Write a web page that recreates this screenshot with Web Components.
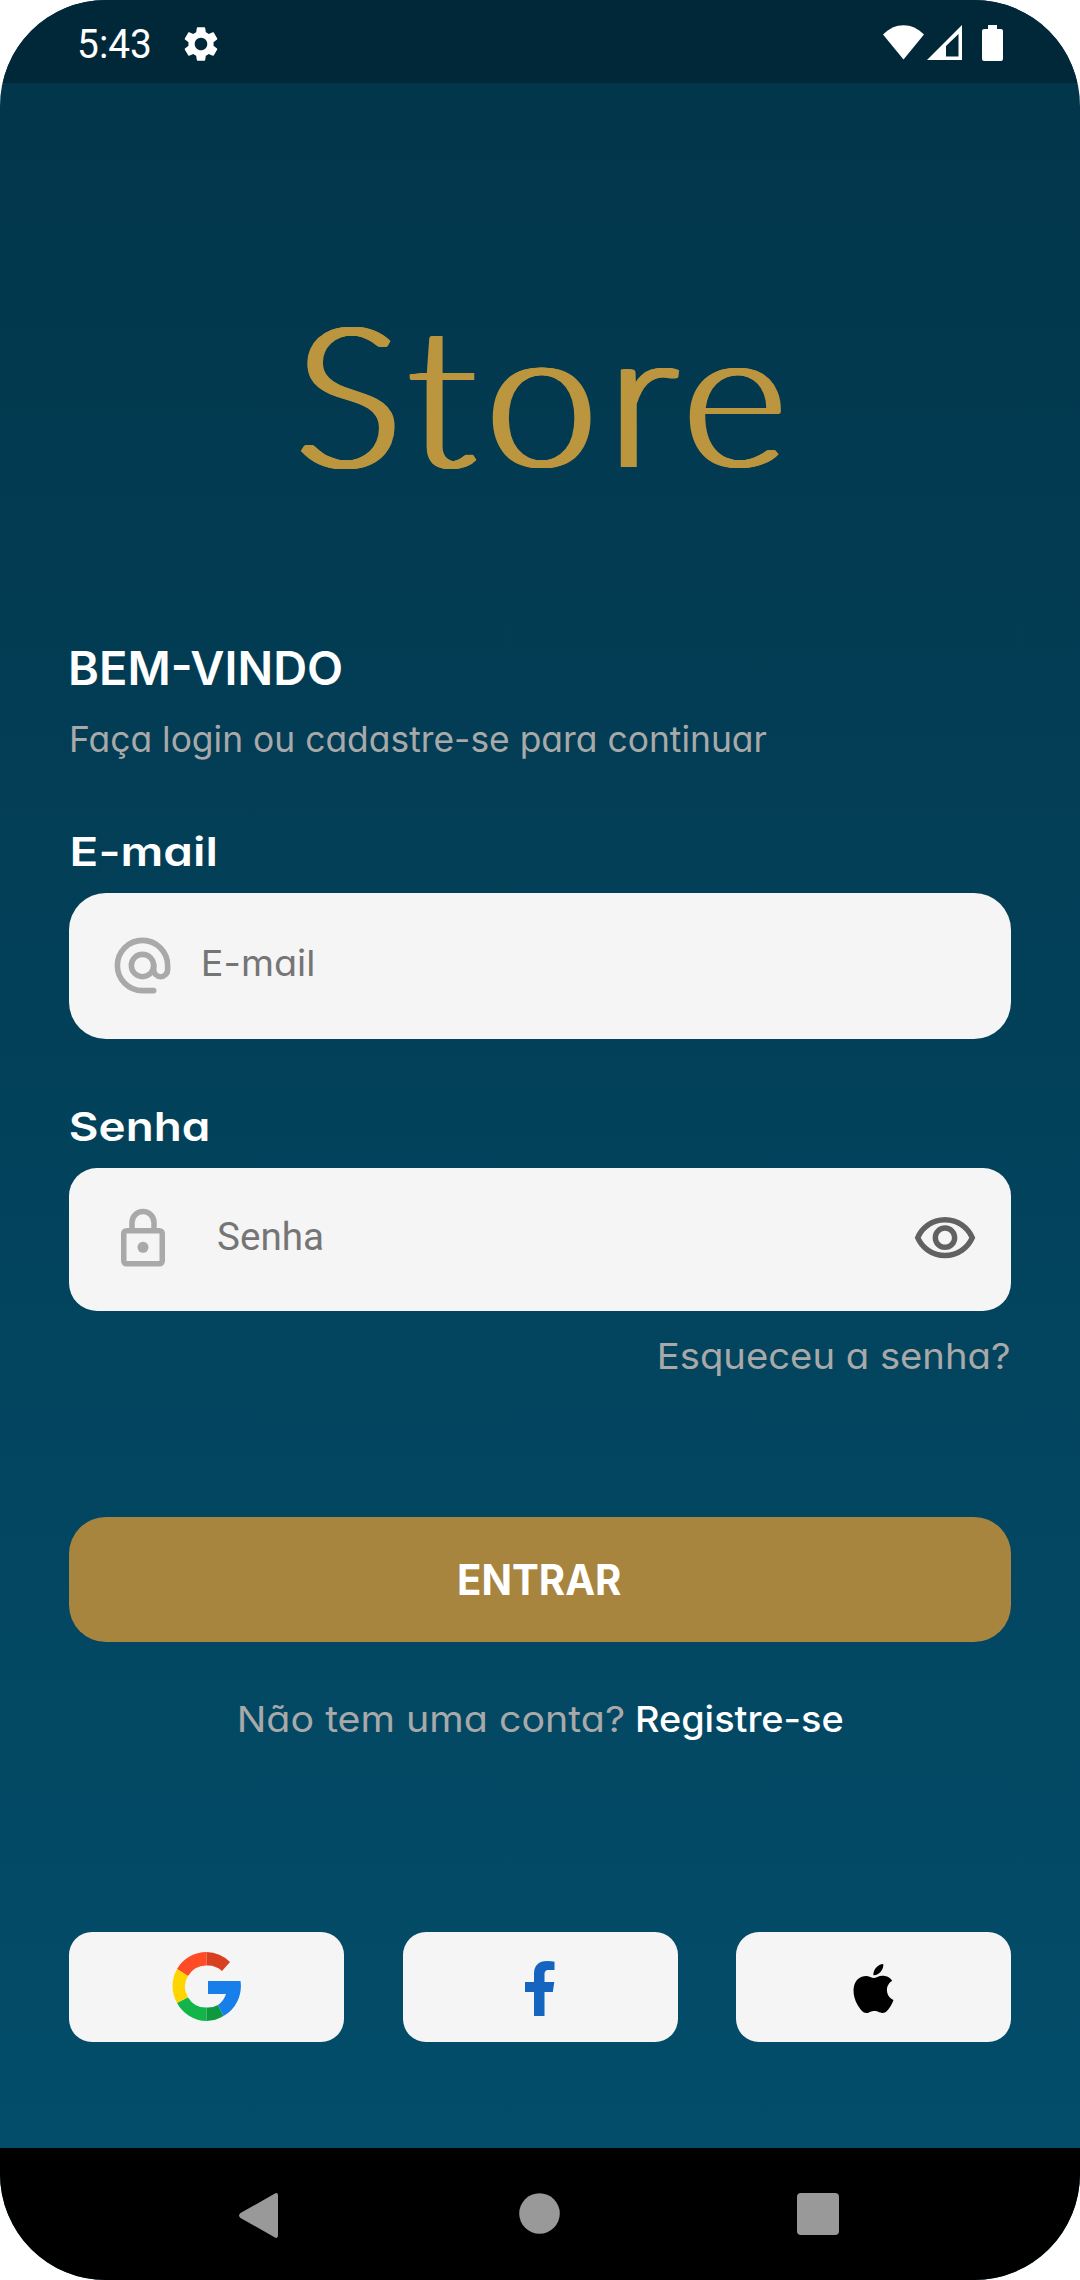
<!DOCTYPE html>
<html lang="pt-BR">
<head>
<meta charset="utf-8">
<title>Store</title>
<style>
html,body{margin:0;padding:0;background:#fff}
body{width:1080px;height:2280px;overflow:hidden;font-family:Inter,"Noto Sans",sans-serif}
</style>
</head>
<body>
<login-screen></login-screen>
<script>
const icons={
settings:'<svg viewBox="0 0 24 24"><path fill="currentColor" d="M19.14 12.94c.04-.3.06-.61.06-.94 0-.32-.02-.64-.07-.94l2.03-1.58c.18-.14.23-.41.12-.61l-1.92-3.32c-.12-.22-.37-.29-.59-.22l-2.39.96c-.5-.38-1.03-.7-1.62-.94L14.4 2.81c-.04-.24-.24-.41-.48-.41h-3.84c-.24 0-.43.17-.47.41L9.25 5.35C8.66 5.59 8.12 5.92 7.63 6.29L5.24 5.33c-.22-.08-.47 0-.59.22L2.74 8.87c-.12.21-.08.47.12.61l2.03 1.58C4.84 11.36 4.8 11.69 4.8 12s.02.64.07.94l-2.03 1.58c-.18.14-.23.41-.12.61l1.92 3.32c.12.22.37.29.59.22l2.39-.96c.5.38 1.03.7 1.62.94l.36 2.54c.05.24.24.41.48.41h3.84c.24 0 .44-.17.47-.41l.36-2.54c.59-.24 1.13-.56 1.62-.94l2.39.96c.22.08.47 0 .59-.22l1.92-3.32c.12-.22.07-.47-.12-.61l-2.01-1.58zM12 15.6c-1.98 0-3.6-1.62-3.6-3.6s1.62-3.6 3.6-3.6 3.6 1.62 3.6 3.6-1.62 3.6-3.6 3.6z"/></svg>',
wifi:'<svg viewBox="0 0 41 36"><path fill="currentColor" d="M0 9.5C12-3 29-3 41 9.5L20.500 34.500Z"/></svg>',
signal:'<svg viewBox="0 0 35 36"><path fill="currentColor" fill-rule="evenodd" d="M0 35 35 0V35ZM19 31.500H31.500V9L19 21Z"/></svg>',
battery:'<svg viewBox="0 0 21 36"><path fill="currentColor" d="M6 0h9v4h4a2 2 0 0 1 2 2v28a2 2 0 0 1-2 2H2a2 2 0 0 1-2-2V6a2 2 0 0 1 2-2h4Z"/></svg>',
at:'<svg viewBox="0 0 24 24" fill="none" stroke="currentColor" stroke-width="2" stroke-linecap="round"><path d="M16 21h-4a9 9 0 1 1 9-9v1.500a2.500 2.500 0 0 1-5 0V12"/><circle cx="12" cy="12" r="4"/></svg>',
lock:'<svg viewBox="0 0 24 24" fill="none" stroke="currentColor" stroke-width="2"><rect x="5" y="9" width="14" height="12" rx="1"/><path d="M8 9V6a4 4 0 0 1 8 0v3"/><circle cx="12" cy="15" r="2" fill="currentColor" stroke="none"/></svg>',
eye:'<svg viewBox="0 0 24 24"><path fill="currentColor" d="M12 6c3.790 0 7.170 2.130 8.820 5.500C19.170 14.870 15.790 17 12 17s-7.170-2.130-8.820-5.500C4.830 8.130 8.210 6 12 6m0-2C7 4 2.730 7.110 1 11.500 2.730 15.890 7 19 12 19s9.270-3.110 11-7.500C21.270 7.110 17 4 12 4zm0 5c1.380 0 2.500 1.120 2.500 2.500S13.380 14 12 14s-2.500-1.120-2.500-2.500S10.620 9 12 9m0-2c-2.480 0-4.500 2.020-4.500 4.500S9.520 16 12 16s4.500-2.020 4.500-4.500S14.480 7 12 7z"/></svg>',
google:'<svg viewBox="0 0 69 69"><path fill="#ff4b26" d="M34.500 0A34.500 34.500 0 0 0 5 17L16 24A21 21 0 0 1 34.500 13.500Z"/><path fill="#d93f21" d="M34.500 0A34.500 34.500 0 0 1 58 10L50 19A21 21 0 0 0 34.500 13.500Z"/><path fill="#ffd500" d="M5 17A34.500 34.500 0 0 0 5 51L16 45.500A21 21 0 0 1 16 24Z"/><path fill="#13b54a" d="M5 51A34.500 34.500 0 0 0 34.500 69V55.500A21 21 0 0 1 16 45.500Z"/><path fill="#0f993e" d="M34.500 69A34.500 34.500 0 0 0 51.500 64L46 53A21 21 0 0 1 34.500 55.500Z"/><path fill="#187eea" d="M36 29H68.500A34.500 34.500 0 0 1 51.500 64L46 53A21 21 0 0 0 54 42H36Z"/></svg>',
facebook:'<svg viewBox="0 0 30 55"><path fill="#1565c0" d="M9 55V31H0V21H9V13C9 4 14 0 22 0Q27 0 29.500 .7V9H24C20 9 19.500 11 19.500 14V21H29.300L27.800 31H19.500V55Z"/></svg>',
apple:'<svg viewBox="0 0 24 24"><path d="M12.152 6.896c-.948 0-2.415-1.078-3.960-1.040-2.040.027-3.910 1.183-4.961 3.014-2.117 3.675-.546 9.103 1.519 12.090 1.013 1.454 2.208 3.090 3.792 3.039 1.520-.065 2.090-.987 3.935-.987 1.831 0 2.350.987 3.960.948 1.637-.026 2.676-1.480 3.676-2.948 1.156-1.688 1.636-3.325 1.662-3.415-.039-.013-3.182-1.221-3.220-4.857-.026-3.040 2.480-4.494 2.597-4.559-1.429-2.090-3.623-2.324-4.390-2.376-2-.156-3.675 1.090-4.610 1.090zM15.530 3.830c.843-1.012 1.400-2.427 1.245-3.830-1.207.052-2.662.805-3.532 1.818-.780.896-1.454 2.338-1.273 3.714 1.338.104 2.715-.688 3.559-1.701"/></svg>',
back:'<svg viewBox="0 0 39 45"><path fill="currentColor" d="M35.500 .8Q39-1.500 39 3V42Q39 46.500 35.500 44.200L1.500 25Q-1.500 22.500 1.500 20Z"/></svg>',
home:'<svg viewBox="0 0 41 41"><circle cx="20.500" cy="20.500" r="20.300" fill="currentColor"/></svg>',
recents:'<svg viewBox="0 0 42 42"><rect width="42" height="42" rx="4" fill="currentColor"/></svg>'
};
const define=(name,html,setup)=>{
  const t=document.createElement('template');
  t.innerHTML=html;
  customElements.define(name,class extends HTMLElement{
    connectedCallback(){
      if(this.shadowRoot)return;
      this.attachShadow({mode:'open'}).append(t.content.cloneNode(true));
      if(setup)setup(this,this.shadowRoot);
    }
  });
};

define('ui-icon','<style>:host{display:block;flex:none}svg{display:block;width:100%;height:100%}</style>',(el,root)=>{
  root.innerHTML+=icons[el.getAttribute('name')];
  el.style.width=el.getAttribute('w')+'px';
  el.style.height=(el.getAttribute('h')||el.getAttribute('w'))+'px';
});

/* One line of text stretched so that its ink fills the width given in "w". */
define('fit-text','<style>:host{display:block;flex:none;white-space:nowrap}span{display:inline-block;transform-origin:0 50%}</style><span><slot></slot></span>',(el,root)=>{
  const span=root.querySelector('span'),w=+el.getAttribute('w'),cs=getComputedStyle(el);
  el.style.width=w+'px';
  const c=document.createElement('canvas').getContext('2d');
  c.font=`${cs.fontWeight} ${cs.fontSize} ${cs.fontFamily}`;
  const m=c.measureText(el.textContent.trim());
  const spacing=parseFloat(cs.letterSpacing)||0;
  const left=-m.actualBoundingBoxLeft,right=m.width-m.actualBoundingBoxRight+spacing;
  const k=w/(span.getBoundingClientRect().width-left-right);
  span.style.transform=`translateX(${-left*k}px) scaleX(${k})`;
});

define('status-bar',`<style>
:host{display:flex;box-sizing:border-box;height:83px;padding:0 77px 0 80px;background:#012838;color:#fff;align-items:flex-start}
fit-text{font:400 40px/60px Roboto,sans-serif;margin-top:14.500px}
.gear{margin:22.500px auto 0 30.500px}
.right{display:flex;margin-top:25px}
</style><fit-text w="69.500">5:43</fit-text><ui-icon class="gear" name="settings" w="42"></ui-icon>
<div class="right"><ui-icon name="wifi" w="41" h="36"></ui-icon><ui-icon name="signal" w="35" h="36" style="margin-left:3px"></ui-icon><ui-icon name="battery" w="21" h="36" style="margin-left:20px"></ui-icon></div>`);

define('store-logo',`<style>
:host{display:block;height:200px;color:#bb963f}
fit-text{font:300 196px/200px Lato,sans-serif;letter-spacing:9px;margin:0 auto;
text-shadow:-3px 0,-2px 0,-1px 0,1px 0,2px 0,3px 0}
</style><fit-text w="475">Store</fit-text>`);

define('text-field',`<style>
:host{display:flex;align-items:center;box-sizing:border-box;background:#f5f5f5;color:#757575}
</style><slot></slot>`);

define('primary-button',`<style>
:host{display:flex;justify-content:center;align-items:center;background:#a8853f;color:#fff;border-radius:37px;font-weight:700;font-size:42.500px;line-height:60px}
</style><slot></slot>`);

define('social-button',`<style>
:host{display:flex;width:275px;height:110px;justify-content:center;align-items:center;background:#f5f5f5;border-radius:23px}
</style><slot></slot>`);

define('nav-bar',`<style>
:host{display:flex;box-sizing:border-box;height:132px;padding:0 241.500px 0 239px;background:#000;color:#999;justify-content:space-between;align-items:flex-start}
ui-icon{margin-top:45px}
</style><ui-icon name="back" w="39" h="45"></ui-icon><ui-icon name="home" w="41" style="margin-left:4.500px"></ui-icon><ui-icon name="recents" w="42"></ui-icon>`);

define('login-screen',`<style>
:host{display:flex;flex-direction:column;width:1080px;height:2280px;border-radius:106px;overflow:hidden;background:linear-gradient(#02354a,#034d6a 2148px);color:#fff;font-feature-settings:"cv11";font-family:Inter,"Noto Sans",sans-serif}
main{flex:1;display:flex;flex-direction:column;padding:0 69px}
.logo{margin-top:209px}
.title{font-weight:600;font-size:47px;line-height:60px;margin:146px 0 0 2px}
.sub{font-size:35.500px;line-height:50px;margin:17px 0 0 2.500px;color:#a9a9a9}
.label{font-weight:600;font-size:40px;line-height:50px}
.email{margin-top:16.500px;height:145.500px;padding-left:40px;border-radius:37px}
.email fit-text{margin:-6px 0 0 27.500px;font-size:36px;line-height:50px}
.pass{margin-top:16px;height:143.500px;padding:0 33.500px 0 41px;border-radius:28px}
.pass fit-text{margin:-4px 0 0 42px;font:400 38.500px/50px Roboto,sans-serif}
.lead{color:#a9a9a9}.eye{color:#616161;margin-left:auto}
.forgot{font-size:36px;line-height:50px;color:#a9a9a9;margin:19.500px 2px 0 auto}
primary-button{margin-top:136px;height:125px}
primary-button fit-text{margin-top:2px}
.signup{display:flex;margin:52px 0 0 171px;gap:13.500px;font-size:36px;line-height:50px;color:#a9a9a9}
.signup .go{color:#fff;font-weight:500}
.social{display:flex;justify-content:space-between;margin-top:188px}
</style>
<status-bar></status-bar>
<main>
<store-logo class="logo"></store-logo>
<fit-text class="title" w="270">BEM-VINDO</fit-text>
<fit-text class="sub" w="694.500">Faça login ou cadastre-se para continuar</fit-text>
<fit-text class="label" w="143" style="margin:61.500px 0 0 2.500px">E-mail</fit-text>
<text-field class="email"><ui-icon class="lead" name="at" w="67"></ui-icon><fit-text w="108.500">E-mail</fit-text></text-field>
<fit-text class="label" w="138" style="margin:63px 0 0 1px">Senha</fit-text>
<text-field class="pass"><ui-icon class="lead" name="lock" w="66"></ui-icon><fit-text w="104">Senha</fit-text><ui-icon class="eye" name="eye" w="66"></ui-icon></text-field>
<fit-text class="forgot" w="349">Esqueceu a senha?</fit-text>
<primary-button><fit-text w="162.500">ENTRAR</fit-text></primary-button>
<div class="signup"><fit-text w="383.500">Não tem uma conta?</fit-text><fit-text class="go" w="205.500">Registre-se</fit-text></div>
<div class="social">
<social-button><ui-icon name="google" w="69"></ui-icon></social-button>
<social-button><ui-icon name="facebook" w="30" h="55" style="margin-top:4px"></ui-icon></social-button>
<social-button><ui-icon name="apple" w="49" style="margin-top:4px"></ui-icon></social-button>
</div>
</main>
<nav-bar></nav-bar>`);
</script>
</body>
</html>
